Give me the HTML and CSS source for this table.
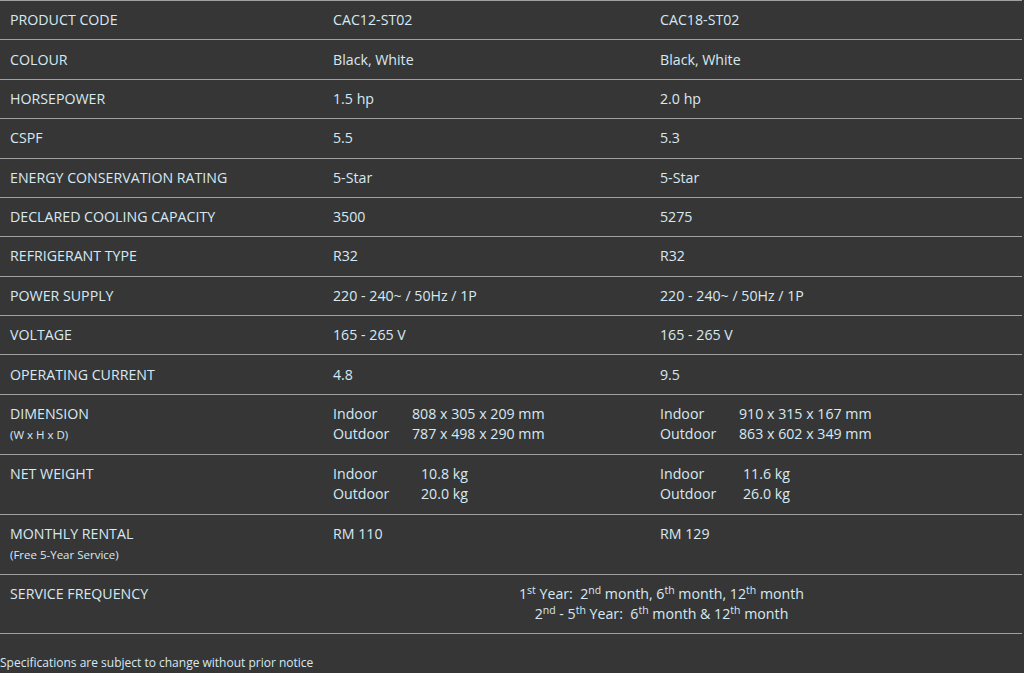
FILE: index.html
```html
<!DOCTYPE html>
<html>
<head>
<meta charset="utf-8">
<link rel="stylesheet" href="styles.css">
</head>
<body>
<div class="page">
<table class="spec">
<colgroup><col class="c1"><col class="c2"><col class="c3"></colgroup>
<tr><td>PRODUCT CODE</td><td>CAC12-ST02</td><td>CAC18-ST02</td></tr>
<tr><td>COLOUR</td><td>Black, White</td><td>Black, White</td></tr>
<tr><td>HORSEPOWER</td><td>1.5 hp</td><td>2.0 hp</td></tr>
<tr><td>CSPF</td><td>5.5</td><td>5.3</td></tr>
<tr><td>ENERGY CONSERVATION RATING</td><td>5-Star</td><td>5-Star</td></tr>
<tr><td>DECLARED COOLING CAPACITY</td><td>3500</td><td>5275</td></tr>
<tr><td>REFRIGERANT TYPE</td><td>R32</td><td>R32</td></tr>
<tr><td>POWER SUPPLY</td><td>220 - 240~ / 50Hz / 1P</td><td>220 - 240~ / 50Hz / 1P</td></tr>
<tr><td>VOLTAGE</td><td>165 - 265 V</td><td>165 - 265 V</td></tr>
<tr><td>OPERATING CURRENT</td><td>4.8</td><td>9.5</td></tr>
<tr><td>DIMENSION<br><span class="sub">(W x H x D)</span></td>
<td><div class="pair"><span class="k">Indoor</span><span>808 x 305 x 209 mm</span></div><div class="pair"><span class="k">Outdoor</span><span>787 x 498 x 290 mm</span></div></td>
<td><div class="pair"><span class="k">Indoor</span><span>910 x 315 x 167 mm</span></div><div class="pair"><span class="k">Outdoor</span><span>863 x 602 x 349 mm</span></div></td></tr>
<tr><td>NET WEIGHT</td>
<td><div class="pair"><span class="k k-wide">Indoor</span><span>10.8 kg</span></div><div class="pair"><span class="k k-wide">Outdoor</span><span>20.0 kg</span></div></td>
<td><div class="pair"><span class="k k-mid">Indoor</span><span>11.6 kg</span></div><div class="pair"><span class="k k-mid">Outdoor</span><span>26.0 kg</span></div></td></tr>
<tr><td>MONTHLY RENTAL<br><span class="sub">(Free 5-Year Service)</span></td><td>RM 110</td><td>RM 129</td></tr>
<tr><td>SERVICE FREQUENCY</td><td colspan="2" class="center">1<sup>st</sup> Year:&nbsp; 2<sup>nd</sup> month, 6<sup>th</sup> month, 12<sup>th</sup> month<br>2<sup>nd</sup> - 5<sup>th</sup> Year:&nbsp; 6<sup>th</sup> month &amp; 12<sup>th</sup> month</td></tr>
</table>
<p class="note">Specifications are subject to change without prior notice</p>
</div>
</body>
</html>
```

FILE: styles.css
```css
html, body {
  margin: 0;
  padding: 0;
  background: #363636;
}
.page {
  width: 1024px;
  height: 673px;
  background: #363636;
  color: #d6e9f2;
  font-family: "Open Sans", "Noto Sans", sans-serif;
  font-size: 14.2px;
  overflow: hidden;
}
.spec {
  width: 1022px;
  border-collapse: collapse;
  border-top: 1px solid #a0a0a0;
}
.c1 { width: 323px; }
.c2 { width: 327px; }
.spec td {
  padding: 9.2px 10px;
  line-height: 20px;
  vertical-align: top;
  border-bottom: 1px solid #a0a0a0;
}
.sub {
  font-size: 11.5px;
}
.pair {
  display: flex;
}
.k {
  width: 79px;
}
.k-wide { width: 88px; }
.k-mid { width: 83px; }
.center {
  text-align: center;
  padding-right: 32px !important;
}
sup {
  font-size: 10.5px;
  line-height: 0;
  vertical-align: 5px;
}
.note {
  margin: 21px 0 0 0;
  font-size: 12px;
  line-height: 16px;
}
```
